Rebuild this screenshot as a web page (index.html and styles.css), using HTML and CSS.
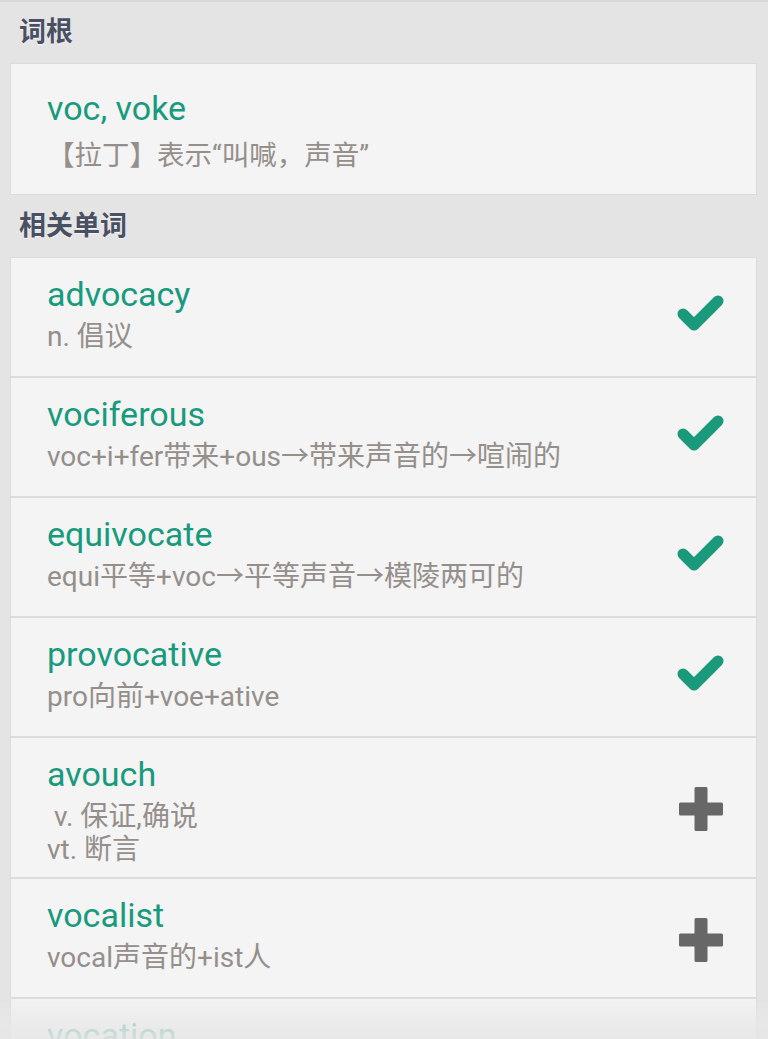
FILE: index.html
```html
<!DOCTYPE html>
<html lang="zh">
<head>
<meta charset="utf-8">
<title>词根</title>
<link rel="stylesheet" href="styles.css">
</head>
<body>
<div class="page">
  <h2 class="section-title first">词根</h2>
  <div class="card root-card">
    <div class="root-word">voc, voke</div>
    <div class="root-desc">【拉丁】表示“叫喊，声音”</div>
  </div>

  <h2 class="section-title">相关单词</h2>
  <div class="card list">
    <div class="row">
      <div class="text">
        <div class="word">advocacy</div>
        <div class="desc">n. 倡议</div>
      </div>
      <svg class="icon" viewBox="0 0 48 48"><polyline class="check" points="6,19 17,30 41,6"/></svg>
    </div>
    <div class="row">
      <div class="text">
        <div class="word">vociferous</div>
        <div class="desc">voc+i+fer带来+ous→带来声音的→喧闹的</div>
      </div>
      <svg class="icon" viewBox="0 0 48 48"><polyline class="check" points="6,19 17,30 41,6"/></svg>
    </div>
    <div class="row">
      <div class="text">
        <div class="word">equivocate</div>
        <div class="desc">equi平等+voc→平等声音→模陵两可的</div>
      </div>
      <svg class="icon" viewBox="0 0 48 48"><polyline class="check" points="6,19 17,30 41,6"/></svg>
    </div>
    <div class="row">
      <div class="text">
        <div class="word">provocative</div>
        <div class="desc">pro向前+voe+ative</div>
      </div>
      <svg class="icon" viewBox="0 0 48 48"><polyline class="check" points="6,19 17,30 41,6"/></svg>
    </div>
    <div class="row">
      <div class="text">
        <div class="word">avouch</div>
        <div class="desc">&nbsp;v. 保证,确说</div>
        <div class="desc">vt. 断言</div>
      </div>
      <svg class="icon" viewBox="0 0 48 48"><path class="plus" d="M17.5 3.5a1.5 1.5 0 0 1 1.5-1.5h10a1.5 1.5 0 0 1 1.5 1.5V17.5h14a1.5 1.5 0 0 1 1.5 1.5v10a1.5 1.5 0 0 1-1.5 1.5H30.5v14a1.5 1.5 0 0 1-1.5 1.5h-10a1.5 1.5 0 0 1-1.5-1.5V30.5h-14A1.5 1.5 0 0 1 2 29V19a1.5 1.5 0 0 1 1.5-1.5h14z"/></svg>
    </div>
    <div class="row">
      <div class="text">
        <div class="word">vocalist</div>
        <div class="desc">vocal声音的+ist人</div>
      </div>
      <svg class="icon" viewBox="0 0 48 48"><path class="plus" d="M17.5 3.5a1.5 1.5 0 0 1 1.5-1.5h10a1.5 1.5 0 0 1 1.5 1.5V17.5h14a1.5 1.5 0 0 1 1.5 1.5v10a1.5 1.5 0 0 1-1.5 1.5H30.5v14a1.5 1.5 0 0 1-1.5 1.5h-10a1.5 1.5 0 0 1-1.5-1.5V30.5h-14A1.5 1.5 0 0 1 2 29V19a1.5 1.5 0 0 1 1.5-1.5h14z"/></svg>
    </div>
    <div class="row">
      <div class="text">
        <div class="word">vocation</div>
      </div>
    </div>
  </div>
</div>
<div class="fade"></div>
</body>
</html>
```
FILE: styles.css
```css
html, body {
  margin: 0;
  padding: 0;
  height: 1039px;
  overflow: hidden;
  background: #e4e4e4;
}

body {
  font-family: Roboto, "Noto Sans CJK SC", sans-serif;
}

.page {
  border-top: 2px solid #d8d8d8;
  padding: 0 11px 0 10px;
}

.section-title {
  margin: 0;
  height: 62px;
  line-height: 62px;
  padding-left: 9px;
  font-size: 27px;
  font-weight: 700;
  color: #4a5063;
  text-shadow: 0 1px 1px rgba(255, 255, 255, 0.7);
}

.section-title.first {
  height: 61px;
  line-height: 61px;
}

.card {
  background: #f4f4f4;
  border: 1px solid #dbdbdb;
}

.root-card {
  padding: 22px 36px 22px 36px;
}

.root-word {
  font-size: 34px;
  line-height: 44px;
  color: #189a7d;
}

.root-desc {
  margin-top: 9px;
  font-size: 27.5px;
  line-height: 33px;
  color: #948f8b;
}

.row {
  display: flex;
  align-items: center;
  min-height: 118px;
  box-sizing: border-box;
  padding: 14px 31px 11px 36px;
}

.row + .row {
  border-top: 2px solid #dcdcdc;
  min-height: 120px;
}

.text {
  flex: 1;
  align-self: flex-start;
}

.word {
  font-size: 34px;
  line-height: 44px;
  color: #189a7d;
}

.desc {
  font-size: 28px;
  line-height: 33px;
  color: #948f8b;
}

.word + .desc {
  margin-top: 4px;
}

.icon {
  width: 48px;
  height: 48px;
  flex: none;
}

.check {
  fill: none;
  stroke: #1b9a7b;
  stroke-width: 11;
  stroke-linecap: round;
  stroke-linejoin: round;
}

.plus {
  fill: #676767;
}

.fade {
  position: fixed;
  left: 0;
  right: 0;
  bottom: 0;
  height: 42px;
  background: linear-gradient(to bottom, rgba(232, 232, 232, 0) 0%, rgba(232, 232, 232, 0.75) 60%, rgba(230, 230, 230, 0.9) 100%);
  pointer-events: none;
}
```
